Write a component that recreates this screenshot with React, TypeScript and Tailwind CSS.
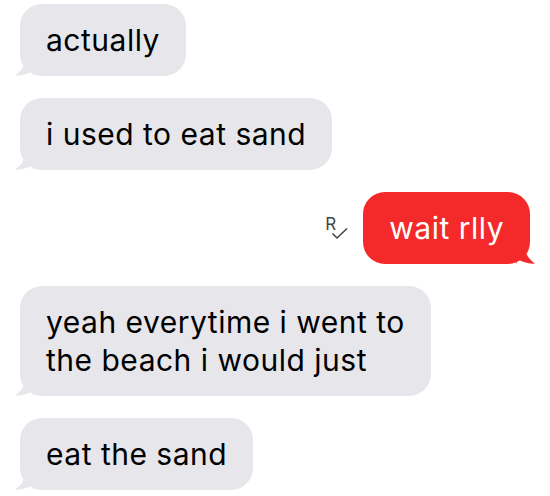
import React from "react";

type Msg = { from: "them" | "me"; lines: string[]; read?: boolean };

const messages: Msg[] = [
  { from: "them", lines: ["actually"] },
  { from: "them", lines: ["i used to eat sand"] },
  { from: "me", lines: ["wait rlly"], read: true },
  { from: "them", lines: ["yeah everytime i went to", "the beach i would just"] },
  { from: "them", lines: ["eat the sand"] },
];

// little curled tail at the bottom corner of a bubble
function Tail({ side, color }: { side: "left" | "right"; color: string }) {
  const flip = side === "right";
  return (
    <svg
      width="22"
      height="22"
      viewBox="0 0 22 22"
      className={flip ? "absolute -right-[8px] bottom-0 -scale-x-100" : "absolute -left-[8px] bottom-0"}
    >
      <path d="M14 0 C14 10 10 17 3 21.6 C10 22 16 20 20 17 L22 22 L22 0 Z" fill={color} />
    </svg>
  );
}

function ReadMark() {
  return (
    <div className="relative w-[26px] h-[26px] mr-[12px] mt-[2px]">
      <span className="absolute left-0 top-0 text-[17px] leading-none text-[#444]" style={{ fontFamily: "Inter, sans-serif" }}>R</span>
      <svg width="18" height="14" viewBox="0 0 18 14" className="absolute left-[6px] top-[11px]">
        <path d="M1.5 6.5 L6 11 L16 1.5" stroke="#444" strokeWidth="1.6" fill="none" />
      </svg>
    </div>
  );
}

function Bubble({ msg }: { msg: Msg }) {
  const mine = msg.from === "me";
  const color = mine ? "#f42a2a" : "#e6e6eb";
  return (
    <div className={mine ? "flex justify-end items-center" : "flex justify-start"}>
      {msg.read && <ReadMark />}
      <div
        className={
          "relative rounded-[22px] px-[26px] py-[17px] text-[30px] leading-[38px] tracking-[0.5px] " +
          (mine ? "bg-[#f42a2a] text-white" : "bg-[#e6e6eb] text-black")
        }
      >
        {msg.lines.map((l, i) => (
          <div key={i} className="whitespace-nowrap">{l}</div>
        ))}
        <Tail side={mine ? "right" : "left"} color={color} />
      </div>
    </div>
  );
}

export default function App() {
  return (
    <div
      className="w-[550px] h-[496px] bg-white pl-[20px] pr-[20px] pt-[4px] flex flex-col gap-[22px] overflow-hidden"
      style={{ fontFamily: "Inter, 'Liberation Sans', sans-serif" }}
    >
      {messages.map((m, i) => (
        <Bubble key={i} msg={m} />
      ))}
    </div>
  );
}
